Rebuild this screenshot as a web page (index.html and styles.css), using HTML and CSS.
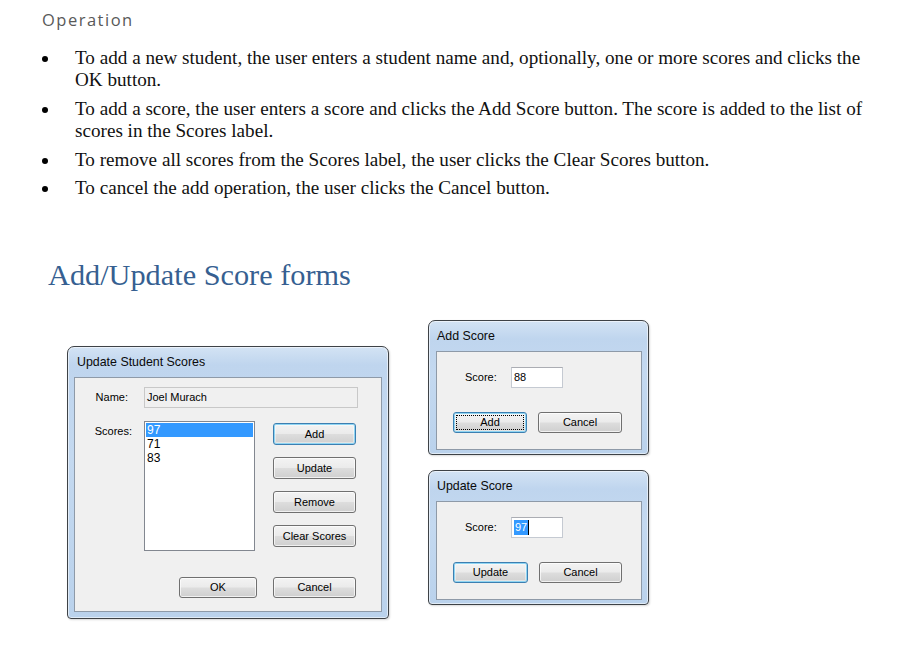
FILE: index.html
```html
<!DOCTYPE html>
<html>
<head>
<meta charset="utf-8">
<link rel="stylesheet" href="styles.css">
</head>
<body>
<div class="page">
  <div class="section-label">Operation</div>
  <ul class="bullets">
    <li><span class="dot"></span><span class="txt">To add a new student, the user enters a student name and, optionally, one or more scores and clicks the OK button.</span></li>
    <li><span class="dot"></span><span class="txt">To add a score, the user enters a score and clicks the Add Score button. The score is added to the list of scores in the Scores label.</span></li>
    <li><span class="dot"></span><span class="txt">To remove all scores from the Scores label, the user clicks the Clear Scores button.</span></li>
    <li><span class="dot"></span><span class="txt">To cancel the add operation, the user clicks the Cancel button.</span></li>
  </ul>
  <h2 class="heading">Add/Update Score forms</h2>

  <div class="desktop">
    <div class="win win-main">
      <div class="titlebar">Update Student Scores</div>
      <div class="client">
        <div class="row-name">
          <span class="lbl lbl-name">Name:</span>
          <div class="textbox readonly name-box">Joel Murach</div>
        </div>
        <div class="row-scores">
          <span class="lbl lbl-scores">Scores:</span>
          <div class="listbox">
            <div class="item selected">97</div>
            <div class="item">71</div>
            <div class="item">83</div>
          </div>
          <div class="btn-col">
            <div class="btn default w83">Add</div>
            <div class="btn w83">Update</div>
            <div class="btn w83">Remove</div>
            <div class="btn w83">Clear Scores</div>
          </div>
        </div>
        <div class="row-bottom">
          <div class="btn w78">OK</div>
          <div class="btn w83">Cancel</div>
        </div>
      </div>
    </div>

    <div class="right-col">
      <div class="win win-small">
        <div class="titlebar">Add Score</div>
        <div class="client">
          <div class="row-score">
            <span class="lbl lbl-score">Score:</span>
            <div class="textbox score-box">88</div>
          </div>
          <div class="row-btns">
            <div class="btn default focus w74">Add</div>
            <div class="btn w84">Cancel</div>
          </div>
        </div>
      </div>
      <div class="win win-small">
        <div class="titlebar">Update Score</div>
        <div class="client">
          <div class="row-score">
            <span class="lbl lbl-score">Score:</span>
            <div class="textbox score-box"><span class="sel">97</span><span class="caret"></span></div>
          </div>
          <div class="row-btns">
            <div class="btn default w75">Update</div>
            <div class="btn w83">Cancel</div>
          </div>
        </div>
      </div>
    </div>
  </div>
</div>
</body>
</html>
```

FILE: styles.css
```css
* { box-sizing: border-box; }
html, body { margin: 0; padding: 0; background: #ffffff; }
body { font-family: "Liberation Serif", "Times New Roman", serif; color: #000; }
.page { width: 898px; height: 645px; overflow: hidden; }

.section-label {
  margin: 10px 0 0 42px;
  font-family: "Open Sans", "Liberation Sans", sans-serif;
  font-size: 16.5px;
  line-height: 20px;
  letter-spacing: 1.5px;
  color: #595959;
}

.bullets {
  list-style: none;
  margin: 16.5px 0 0 0;
  padding: 0;
}
.bullets li {
  display: flex;
  align-items: flex-start;
  font-size: 19.15px;
  line-height: 22.5px;
  margin-bottom: 6px;
  color: #111;
}
.bullets .dot {
  flex: none;
  width: 6px;
  height: 6px;
  border-radius: 50%;
  background: #000;
  margin: 9px 27px 0 42px;
}
.bullets .txt { width: 800px; }

.heading {
  margin: 57px 0 0 48px;
  font-family: "Liberation Serif", serif;
  font-weight: normal;
  font-size: 30.3px;
  line-height: 36px;
  color: #365f91;
}

.desktop {
  margin-top: 27px;
  padding-left: 67px;
  display: flex;
  align-items: flex-start;
  gap: 39px;
}

.win {
  border: 1px solid #3e4246;
  border-radius: 7px 7px 4px 4px;
  background: linear-gradient(to bottom, #d3e3f4 0px, #bfd5ee 18px, #c4d9f0 40%, #bad2ec 100%);
  box-shadow: inset 0 0 0 1px rgba(255,255,255,0.55), 1px 1px 2px rgba(0,0,0,0.15);
  display: flex;
  flex-direction: column;
  font-family: "Liberation Sans", Arial, sans-serif;
}
.titlebar {
  height: 30px;
  line-height: 30px;
  font-size: 12.4px;
  color: #0a0a0a;
  flex: none;
}
.client {
  flex: 1;
  background: #f0f0f0;
  border: 1px solid #8e9aa8;
  font-size: 11px;
  color: #000;
}

.win-main {
  margin-top: 26px;
  width: 322px;
  height: 273px;
  padding: 0 6px 6px 6px;
}
.win-main .titlebar { padding-left: 3px; }

.right-col {
  display: flex;
  flex-direction: column;
  gap: 15px;
}
.win-small {
  width: 221px;
  height: 135px;
  padding: 0 6px 4px 7px;
}
.win-small .titlebar { padding-left: 1px; }

.lbl { font-size: 11px; color: #000; }

.textbox {
  background: #fff;
  border: 1px solid #c5cad2;
  border-top-color: #abadb3;
  height: 21px;
  line-height: 19px;
  padding-left: 2px;
  font-size: 11px;
}
.textbox.readonly {
  background: #f0f0f0;
  border-color: #c8c8c8;
}

/* main client */
.row-name {
  display: flex;
  align-items: center;
  margin-top: 9px;
  gap: 16px;
}
.lbl-name { width: 53px; text-align: right; }
.name-box { width: 214px; }

.row-scores {
  display: flex;
  align-items: flex-start;
  margin-top: 13px;
}
.lbl-scores {
  width: 57px;
  text-align: right;
  line-height: 20px;
  margin-right: 12px;
}
.listbox {
  width: 111px;
  height: 130px;
  background: #fff;
  border: 1px solid #828790;
  padding: 1px;
  margin-right: 18px;
}
.item {
  height: 14px;
  line-height: 14px;
  padding-left: 1px;
  font-size: 12px;
}
.item.selected { background: #3399ff; color: #fff; }

.btn-col {
  display: flex;
  flex-direction: column;
  gap: 12px;
  margin-top: 2px;
}
.btn-col .btn { height: 22px; }

.row-bottom {
  display: flex;
  gap: 16px;
  margin-top: 26px;
  padding-left: 104px;
}

/* buttons */
.btn {
  height: 21px;
  border: 1px solid #707070;
  border-radius: 3px;
  background: linear-gradient(to bottom, #f3f3f3 0%, #ebebeb 48%, #dddddd 52%, #cfcfcf 100%);
  box-shadow: inset 0 0 0 1px rgba(255,255,255,0.7);
  display: flex;
  align-items: center;
  justify-content: center;
  font-size: 11px;
  color: #000;
}
.btn.default {
  border-color: #3c7fb1;
  box-shadow: inset 0 0 0 1px #8fd5f3, inset 0 0 0 2px rgba(255,255,255,0.4);
}
.btn.focus {
  outline: 1px dotted #000;
  outline-offset: -4px;
}
.w74 { width: 74px; }
.w75 { width: 75px; }
.w78 { width: 78px; }
.w83 { width: 83px; }
.w84 { width: 84px; }

/* small dialogs */
.row-score {
  display: flex;
  align-items: center;
  margin-top: 15px;
  padding-left: 28px;
}
.lbl-score { width: 46px; }
.score-box { width: 52px; display: flex; align-items: center; }
.sel { background: #3399ff; color: #fff; line-height: 15px; padding: 0 1px; }
.caret { width: 1px; height: 15px; background: #000; }

.row-btns {
  display: flex;
  gap: 11px;
  margin-top: 24px;
  padding-left: 16px;
}
```
